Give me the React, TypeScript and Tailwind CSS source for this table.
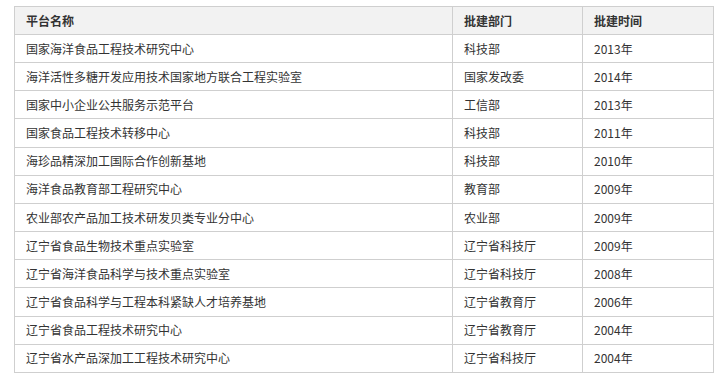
const rows: [string, string, string][] = [
  ["国家海洋食品工程技术研究中心", "科技部", "2013年"],
  ["海洋活性多糖开发应用技术国家地方联合工程实验室", "国家发改委", "2014年"],
  ["国家中小企业公共服务示范平台", "工信部", "2013年"],
  ["国家食品工程技术转移中心", "科技部", "2011年"],
  ["海珍品精深加工国际合作创新基地", "科技部", "2010年"],
  ["海洋食品教育部工程研究中心", "教育部", "2009年"],
  ["农业部农产品加工技术研发贝类专业分中心", "农业部", "2009年"],
  ["辽宁省食品生物技术重点实验室", "辽宁省科技厅", "2009年"],
  ["辽宁省海洋食品科学与技术重点实验室", "辽宁省科技厅", "2008年"],
  ["辽宁省食品科学与工程本科紧缺人才培养基地", "辽宁省教育厅", "2006年"],
  ["辽宁省食品工程技术研究中心", "辽宁省教育厅", "2004年"],
  ["辽宁省水产品深加工工程技术研究中心", "辽宁省科技厅", "2004年"],
];

export default function App() {
  return (
    <div className="w-[722px] h-[384px] bg-white pt-[6px] pl-[14px] font-['Microsoft_YaHei','Noto_Sans_CJK_SC',sans-serif] text-[12px] text-[#333333]">
      <table className="w-[699px] table-fixed">
        <colgroup>
          <col className="w-[438px]" />
          <col className="w-[130px]" />
          <col className="w-[131px]" />
        </colgroup>
        <thead>
          <tr className="h-[28px] bg-[#f2f2f2]">
            <th className="border border-[#cfcfcf] px-[11px] text-left font-bold">平台名称</th>
            <th className="border border-[#cfcfcf] px-[11px] text-left font-bold">批建部门</th>
            <th className="border border-[#cfcfcf] px-[11px] text-left font-bold">批建时间</th>
          </tr>
        </thead>
        <tbody>
          {rows.map(([name, dept, year]) => (
            <tr key={name} className="h-[28.17px]">
              <td className="border border-[#cfcfcf] px-[11px]">{name}</td>
              <td className="border border-[#cfcfcf] px-[11px]">{dept}</td>
              <td className="border border-[#cfcfcf] px-[11px]">{year}</td>
            </tr>
          ))}
        </tbody>
      </table>
    </div>
  );
}
